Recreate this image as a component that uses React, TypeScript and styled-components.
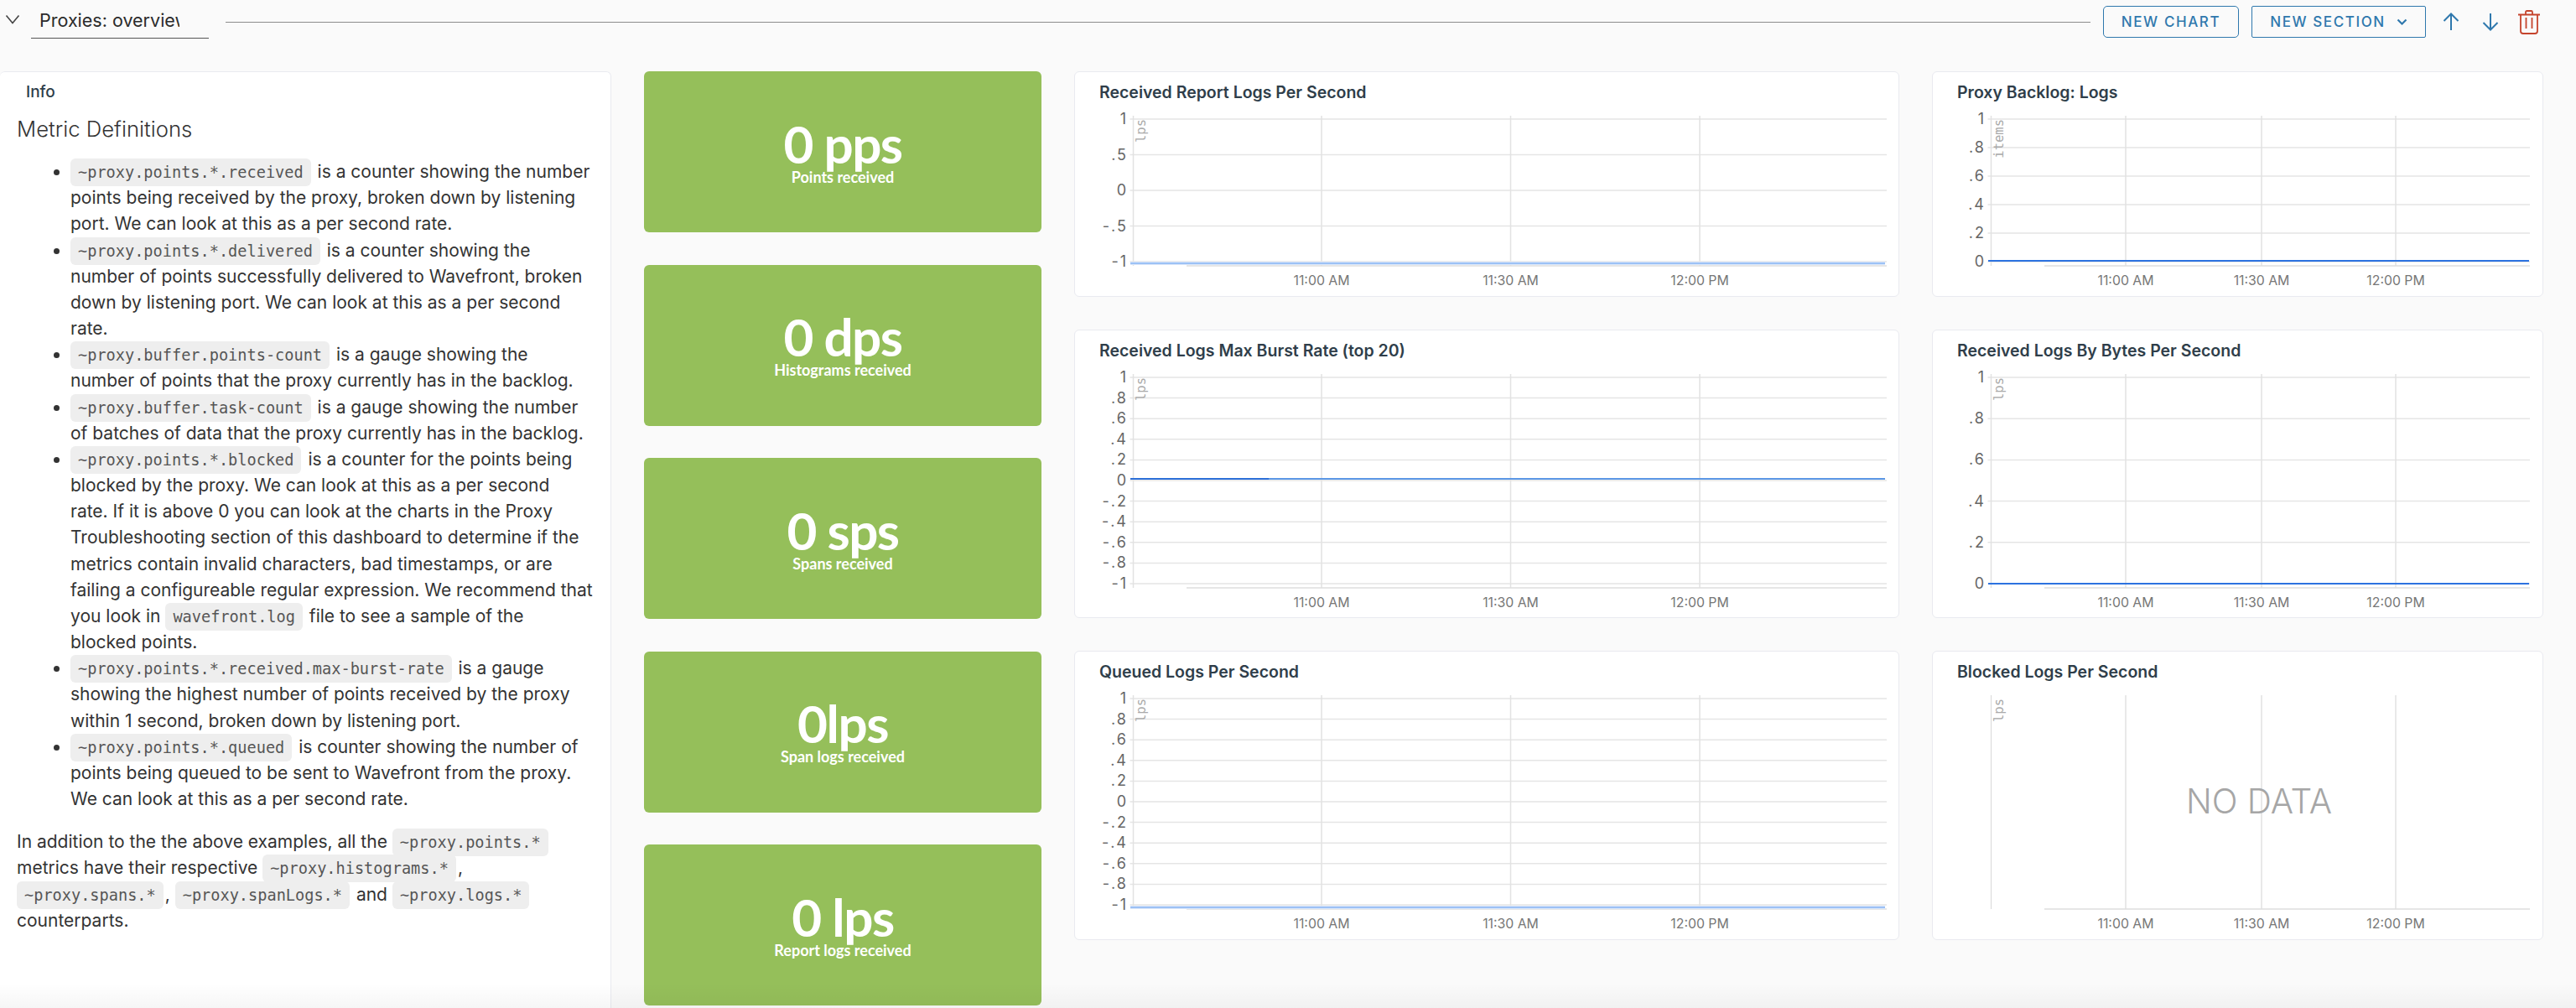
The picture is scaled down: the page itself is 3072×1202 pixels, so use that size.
import { createGlobalStyle } from "styled-components";
import styled from "styled-components";

const GlobalStyle = createGlobalStyle`
  html, body {
    margin: 0;
    padding: 0;
    height: 1202px;
    overflow: hidden;
    background: #fafafa;
    font-family: "Inter", "Noto Sans", sans-serif;
  }
`;

const Page = styled.div`
  position: relative;
  width: 3072px;
  height: 1202px;
  overflow: hidden;
`;

const Header = styled.header`
  display: flex;
  align-items: center;
  height: 52px;
  margin-bottom: 33px;
  padding-right: 43px;
`;

const Collapse = styled.svg`
  width: 18px;
  height: 12px;
  margin: 0 13px 6px 6px;
  fill: none;
  stroke: #444;
  stroke-width: 1.6;
  flex: none;
`;

const TitleInput = styled.input`
  width: 212px;
  height: 39px;
  box-sizing: border-box;
  margin-top: 1px;
  padding: 0 35px 5px 10px;
  border: none;
  border-bottom: 1px solid #565656;
  border-radius: 0;
  outline: none;
  background: transparent;
  color: #2b2b2b;
  font-family: inherit;
  font-size: 21.5px;
  font-weight: 400;
  flex: none;
`;

const Rule = styled.div`
  flex: 1;
  height: 1px;
  margin: 0 15px 0 20px;
  background: #8c8c8c;
`;

const OutlineButton = styled.button<{ $sharp?: boolean; $width: number }>`
  display: flex;
  align-items: center;
  justify-content: center;
  gap: 13px;
  width: ${(p) => p.$width}px;
  height: 38px;
  box-sizing: border-box;
  padding: 0;
  margin-right: 15px;
  background: transparent;
  border: 1px solid #2f78ad;
  border-radius: ${(p) => (p.$sharp ? "2px" : "5px")};
  color: #2f78ad;
  font-family: inherit;
  font-size: 17px;
  font-weight: 500;
  letter-spacing: 1.6px;
  white-space: nowrap;
`;

const Glyph = styled.svg<{ $gap?: number }>`
  flex: none;
  fill: none;
  margin-left: ${(p) => p.$gap ?? 0}px;
`;

const Columns = styled.main`
  display: flex;
  align-items: flex-start;
  gap: 39px;
`;

const InfoCard = styled.section`
  width: 729px;
  height: 1130px;
  box-sizing: border-box;
  flex: none;
  background: #fff;
  border: 1px solid #e9eaf0;
  border-left: none;
  border-radius: 6px 6px 0 0;
  color: #333;
`;

const InfoTitle = styled.h3`
  margin: 0;
  padding: 12px 0 0 31px;
  font-size: 19px;
  line-height: 24px;
  font-weight: 500;
  color: #2f3e4a;
`;

const InfoBody = styled.div`
  padding: 16px 17px 0 20px;
  font-size: 21px;
  line-height: 31.17px;
`;

const InfoHeading = styled.h2`
  margin: 0 0 19px;
  font-size: 25.7px;
  line-height: 32px;
  font-weight: 300;
  color: #333;
`;

const DefList = styled.ul`
  margin: 0 0 20px;
  padding: 0 0 0 64px;
`;

const Code = styled.code`
  padding: 6px 9px;
  margin-right: 2px;
  background: #eee;
  border-radius: 6px;
  color: #565656;
  font-family: "DejaVu Sans Mono", monospace;
  font-size: 18.6px;
  line-height: 1;
`;

const Paragraph = styled.p`
  margin: 0;
`;

const TileColumn = styled.div`
  display: flex;
  flex-direction: column;
  gap: 38.5px;
  width: 474px;
  flex: none;
`;

const Tile = styled.div`
  display: flex;
  flex-direction: column;
  align-items: center;
  justify-content: center;
  height: 192px;
  box-sizing: border-box;
  background: #95bf5a;
  border-radius: 6px;
  color: #fff;
  font-family: "Lato", "Inter", sans-serif;
`;

const TileValue = styled.div`
  font-size: 62px;
  line-height: 62px;
  font-weight: 700;
  letter-spacing: -1.5px;
`;

const TileLabel = styled.div`
  margin-top: -3px;
  font-size: 18px;
  line-height: 24px;
  font-weight: 700;
`;

const ChartGrid = styled.div`
  display: grid;
  grid-template-columns: 984px 729px;
  grid-template-rows: 269px 344px 345px;
  gap: 39px;
`;

const ChartCard = styled.article`
  box-sizing: border-box;
  background: #fff;
  border: 1px solid #e9eaf0;
  border-radius: 6px;
  overflow: hidden;
`;

const ChartTitle = styled.h4`
  height: 47px;
  box-sizing: border-box;
  margin: 0;
  padding: 12px 0 0 29px;
  font-size: 19.5px;
  line-height: 24px;
  font-weight: 600;
  color: #2f3e4a;
`;

const Plot = styled.svg`
  display: block;
  text {
    font-family: "Inter", "Noto Sans", sans-serif;
  }
`;

const TickLabel = styled.text`
  font-size: 18px;
  letter-spacing: 2px;
  fill: #666;
  text-anchor: end;
`;

const TimeLabel = styled.text`
  font-size: 15.8px;
  fill: #777;
  text-anchor: middle;
`;

const UnitLabel = styled.text`
  && {
    font-family: "DejaVu Sans Mono", monospace;
  }
  font-size: 15.5px;
  fill: #aaa;
  text-anchor: end;
`;

const NoDataLabel = styled.text`
  font-size: 40.5px;
  font-weight: 300;
  fill: #a6a6a6;
  text-anchor: middle;
`;

const BottomFade = styled.div`
  position: absolute;
  left: 0;
  right: 0;
  bottom: 0;
  height: 30px;
  background: linear-gradient(to bottom, rgba(0, 0, 0, 0), rgba(0, 0, 0, 0.035));
  pointer-events: none;
`;

type LineKind = "dark" | "pale" | "split";

type ChartProps = {
  title: string;
  wide?: boolean;
  height: number;
  ticks?: string[];
  tickBottom: number;
  unit?: string;
  lineY?: number;
  kind?: LineKind;
  noData?: boolean;
};

const TIMES = ["11:00 AM", "11:30 AM", "12:00 PM"];

const Chart = ({ title, wide, height, ticks = [], tickBottom, unit = "lps", lineY, kind = "dark", noData }: ChartProps) => {
  const width = wide ? 982 : 727;
  const gridX = wide ? [294, 519.5, 745] : [230, 392, 552];
  const right = wide ? 968 : 712;
  const axisX = 69.5;
  const bottom = tickBottom + 5;
  const lineEnd = wide ? 966 : 711;
  const step = ticks.length > 1 ? (tickBottom - 56) / (ticks.length - 1) : 0;

  return (
    <ChartCard>
      <ChartTitle>{title}</ChartTitle>
      <Plot width={width} height={height - 49} viewBox={`0 47 ${width} ${height - 49}`}>
        {ticks.map((t, i) => {
          const y = 56 + i * step;
          return (
            <g key={t}>
              <line x1={axisX - 4} x2={right} y1={y} y2={y} stroke="#e5e5e5" strokeWidth="1.5" />
              <TickLabel x={63} y={y + 6}>
                {t}
              </TickLabel>
            </g>
          );
        })}
        <line x1={axisX} x2={axisX} y1={52} y2={bottom} stroke={noData ? "#d8d8d8" : "#e2e2e2"} strokeWidth={noData ? 1 : 1.5} />
        {gridX.map((x) => (
          <line key={x} x1={x} x2={x} y1={52} y2={bottom} stroke="#e2e2e2" strokeWidth="1.5" />
        ))}
        <line x1={133} x2={right} y1={bottom} y2={bottom} stroke="#dedede" strokeWidth="1.5" />
        {gridX.map((x, i) => (
          <TimeLabel key={x} x={x} y={bottom + 23}>
            {TIMES[i]}
          </TimeLabel>
        ))}
        {unit && (
          <UnitLabel transform={`translate(84 56) rotate(-90)`} x={0} y={0}>
            {unit}
          </UnitLabel>
        )}
        {lineY !== undefined && kind === "pale" && (
          <>
            <rect x={66} y={lineY - 2} width={lineEnd - 66} height={4} fill="#dbe7fa" />
            <line x1={66} x2={lineEnd} y1={lineY} y2={lineY} stroke="#5e9cf0" strokeWidth="1.2" />
          </>
        )}
        {lineY !== undefined && kind === "dark" && (
          <line x1={66} x2={lineEnd} y1={lineY} y2={lineY} stroke="#2c72e0" strokeWidth="2" />
        )}
        {lineY !== undefined && kind === "split" && (
          <>
            <line x1={66} x2={lineEnd} y1={lineY} y2={lineY} stroke="#5b97e6" strokeWidth="2" />
            <line x1={66} x2={231} y1={lineY} y2={lineY} stroke="#2c6fd8" strokeWidth="2" />
          </>
        )}
        {noData && (
          <NoDataLabel x={389} y={193}>
            NO DATA
          </NoDataLabel>
        )}
      </Plot>
    </ChartCard>
  );
};

const TEN = ["1", ".8", ".6", ".4", ".2", "0", "-.2", "-.4", "-.6", "-.8", "-1"];
const FIVE = ["1", ".8", ".6", ".4", ".2", "0"];

export default function App() {
  return (
    <Page>
      <GlobalStyle />
      <Header>
        <Collapse viewBox="0 0 18 12">
          <path d="M1.5 1.5 L9 10.5 L16.5 1.5" />
        </Collapse>
        <TitleInput readOnly value="Proxies: overview" />
        <Rule />
        <OutlineButton $width={162}>NEW CHART</OutlineButton>
        <OutlineButton $sharp $width={208}>
          NEW SECTION
          <svg width="13" height="9" viewBox="0 0 13 9" fill="none" stroke="#2f78ad" strokeWidth="2.2">
            <path d="M1.5 1.5 L6.5 6.5 L11.5 1.5" />
          </svg>
        </OutlineButton>
        <Glyph width="20" height="22" viewBox="0 0 20 22" stroke="#2f78ad" strokeWidth="2" $gap={5}>
          <path d="M10 21 V2 M1.5 10 L10 1.5 L18.5 10" />
        </Glyph>
        <Glyph width="20" height="22" viewBox="0 0 20 22" stroke="#2f78ad" strokeWidth="2" $gap={27}>
          <path d="M10 1 V20 M1.5 12 L10 20.5 L18.5 12" />
        </Glyph>
        <Glyph width="26" height="29" viewBox="0 0 26 29" stroke="#c5442c" strokeWidth="1.8" $gap={23}>
          <path d="M0 5.5 H26 M3 5.5 V25 Q3 28 6 28 H20 Q23 28 23 25 V5.5 M9 5.5 V2.5 Q9 1 10.5 1 H15.5 Q17 1 17 2.5 V5.5 M9.5 9 V22 M16.5 9 V22" />
        </Glyph>
      </Header>
      <Columns>
        <InfoCard>
          <InfoTitle>Info</InfoTitle>
          <InfoBody>
            <InfoHeading>Metric Definitions</InfoHeading>
            <DefList>
              <li>
                <Code>~proxy.points.*.received</Code> is a counter showing the number points being received by the proxy, broken down by listening port. We can look at this as a per second rate.
              </li>
              <li>
                <Code>~proxy.points.*.delivered</Code> is a counter showing the number of points successfully delivered to Wavefront, broken down by listening port. We can look at this as a per second rate.
              </li>
              <li>
                <Code>~proxy.buffer.points-count</Code> is a gauge showing the number of points that the proxy currently has in the backlog.
              </li>
              <li>
                <Code>~proxy.buffer.task-count</Code> is a gauge showing the number of batches of data that the proxy currently has in the backlog.
              </li>
              <li>
                <Code>~proxy.points.*.blocked</Code> is a counter for the points being blocked by the proxy. We can look at this as a per second
                <br />
                rate. If it is above 0 you can look at the charts in the Proxy Troubleshooting section of this dashboard to determine if the metrics contain invalid characters, bad timestamps, or are failing a configureable regular expression. We recommend that you look in <Code>wavefront.log</Code> file to see a sample of the
                <br />
                blocked points.
              </li>
              <li>
                <Code>~proxy.points.*.received.max-burst-rate</Code> is a gauge showing the highest number of points received by the proxy within 1 second, broken down by listening port.
              </li>
              <li>
                <Code>~proxy.points.*.queued</Code> is counter showing the number of points being queued to be sent to Wavefront from the proxy. We can look at this as a per second rate.
              </li>
            </DefList>
            <Paragraph>
              In addition to the the above examples, all the <Code>~proxy.points.*</Code> metrics have their respective <Code>~proxy.histograms.*</Code>, <Code>~proxy.spans.*</Code>, <Code>~proxy.spanLogs.*</Code> and <Code>~proxy.logs.*</Code> counterparts.
            </Paragraph>
          </InfoBody>
        </InfoCard>
        <TileColumn>
          <Tile>
            <TileValue>0 pps</TileValue>
            <TileLabel>Points received</TileLabel>
          </Tile>
          <Tile>
            <TileValue>0 dps</TileValue>
            <TileLabel>Histograms received</TileLabel>
          </Tile>
          <Tile>
            <TileValue>0 sps</TileValue>
            <TileLabel>Spans received</TileLabel>
          </Tile>
          <Tile>
            <TileValue>0lps</TileValue>
            <TileLabel>Span logs received</TileLabel>
          </Tile>
          <Tile>
            <TileValue>0 lps</TileValue>
            <TileLabel>Report logs received</TileLabel>
          </Tile>
        </TileColumn>
        <ChartGrid>
          <Chart title="Received Report Logs Per Second" wide height={269} ticks={["1", ".5", "0", "-.5", "-1"]} tickBottom={226} lineY={228} kind="pale" />
          <Chart title="Proxy Backlog: Logs" height={269} ticks={FIVE} tickBottom={226} unit="items" lineY={225} />
          <Chart title="Received Logs Max Burst Rate (top 20)" wide height={344} ticks={TEN} tickBottom={302} lineY={177} kind="split" />
          <Chart title="Received Logs By Bytes Per Second" height={344} ticks={FIVE} tickBottom={302} lineY={302} />
          <Chart title="Queued Logs Per Second" wide height={345} ticks={TEN} tickBottom={302} lineY={305} kind="pale" />
          <Chart title="Blocked Logs Per Second" height={345} tickBottom={302} noData />
        </ChartGrid>
      </Columns>
      <BottomFade />
    </Page>
  );
}
